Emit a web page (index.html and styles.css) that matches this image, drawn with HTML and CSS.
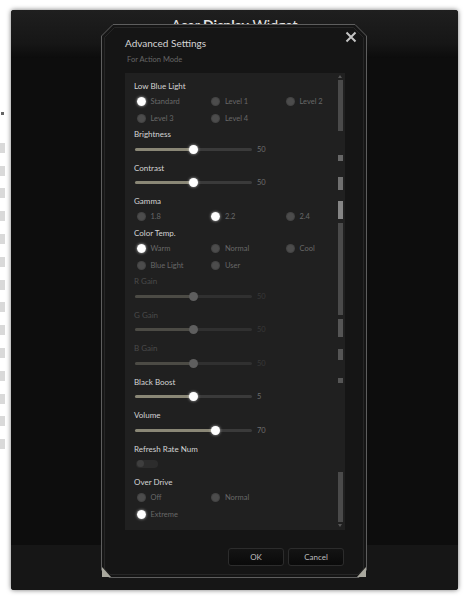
FILE: index.html
```html
<!DOCTYPE html>
<html lang="en">
  <head>
    <meta charset="UTF-8" />
    <meta name="viewport" content="width=device-width, initial-scale=1.0" />
    <title>Acer Display Widget - Advanced Settings</title>
    <link rel="stylesheet" href="styles.css">
  </head>
  <body>
    <div class="side-strip">
      <span class="side-mark"></span>
      <span class="side-item"></span>
      <span class="side-item"></span>
      <span class="side-item"></span>
      <span class="side-item"></span>
      <span class="side-item"></span>
      <span class="side-item"></span>
      <span class="side-item"></span>
      <span class="side-item"></span>
      <span class="side-item"></span>
      <span class="side-item"></span>
      <span class="side-item"></span>
      <span class="side-item"></span>
      <span class="side-item"></span>
      <span class="side-item"></span>
    </div>

    <div class="app-window">
      <div class="app-header">
        <h1 class="app-title">Acer <b>Display</b> Widget</h1>
      </div>
      <div class="app-body"></div>
      <div class="app-footer"></div>

      <div class="dialog">
        <svg class="dialog-frame" width="266" height="554" viewBox="0 0 266 554">
          <path d="M0.5,12 L12,0.5 L254,0.5 L265.5,12 L265.5,546 L258,553.5 L8,553.5 L0.5,546 Z" fill="#151515" stroke="#5e5e5e" />
          <path d="M3.5,13.5 L13.5,3.5 L252.5,3.5 L262.5,13.5 L262.5,545 L257,550.5 L9,550.5 L3.5,545 Z" fill="none" stroke="#262626" />
          <polygon points="1,543 10,553 1,553" fill="#a9a89e" />
          <polygon points="265,543 256,553 265,553" fill="#a9a89e" />
        </svg>

        <button class="close-btn" aria-label="Close">
          <svg width="12" height="12" viewBox="0 0 12 12">
            <path d="M1.5,1.5 L10.5,10.5 M10.5,1.5 L1.5,10.5" stroke="#c4c4c4" stroke-width="2" />
          </svg>
        </button>

        <div class="dialog-title">Advanced Settings</div>
        <div class="dialog-sub">For Action Mode</div>

        <div class="panel">
          <div class="settings">
            <section class="setting">
              <div class="setting-label">Low Blue Light</div>
              <div class="radio-group">
                <span class="radio checked"><span class="dot"></span>Standard</span>
                <span class="radio"><span class="dot"></span>Level 1</span>
                <span class="radio"><span class="dot"></span>Level 2</span>
                <span class="radio"><span class="dot"></span>Level 3</span>
                <span class="radio"><span class="dot"></span>Level 4</span>
              </div>
            </section>

            <section class="setting">
              <div class="setting-label">Brightness</div>
              <div class="slider">
                <div class="track"><div class="fill" style="width: 50%"><span class="thumb"></span></div></div>
                <span class="value">50</span>
              </div>
            </section>

            <section class="setting">
              <div class="setting-label">Contrast</div>
              <div class="slider">
                <div class="track"><div class="fill" style="width: 50%"><span class="thumb"></span></div></div>
                <span class="value">50</span>
              </div>
            </section>

            <section class="setting">
              <div class="setting-label">Gamma</div>
              <div class="radio-group">
                <span class="radio"><span class="dot"></span>1.8</span>
                <span class="radio checked"><span class="dot"></span>2.2</span>
                <span class="radio"><span class="dot"></span>2.4</span>
              </div>
            </section>

            <section class="setting">
              <div class="setting-label">Color Temp.</div>
              <div class="radio-group">
                <span class="radio checked"><span class="dot"></span>Warm</span>
                <span class="radio"><span class="dot"></span>Normal</span>
                <span class="radio"><span class="dot"></span>Cool</span>
                <span class="radio"><span class="dot"></span>Blue Light</span>
                <span class="radio"><span class="dot"></span>User</span>
              </div>
            </section>

            <section class="setting disabled">
              <div class="setting-label">R Gain</div>
              <div class="slider">
                <div class="track"><div class="fill" style="width: 50%"><span class="thumb"></span></div></div>
                <span class="value">50</span>
              </div>
            </section>

            <section class="setting disabled">
              <div class="setting-label">G Gain</div>
              <div class="slider">
                <div class="track"><div class="fill" style="width: 50%"><span class="thumb"></span></div></div>
                <span class="value">50</span>
              </div>
            </section>

            <section class="setting disabled">
              <div class="setting-label">B Gain</div>
              <div class="slider">
                <div class="track"><div class="fill" style="width: 50%"><span class="thumb"></span></div></div>
                <span class="value">50</span>
              </div>
            </section>

            <section class="setting">
              <div class="setting-label">Black Boost</div>
              <div class="slider">
                <div class="track"><div class="fill" style="width: 50%"><span class="thumb"></span></div></div>
                <span class="value">5</span>
              </div>
            </section>

            <section class="setting">
              <div class="setting-label">Volume</div>
              <div class="slider">
                <div class="track"><div class="fill" style="width: 69%"><span class="thumb"></span></div></div>
                <span class="value">70</span>
              </div>
            </section>

            <section class="setting">
              <div class="setting-label">Refresh Rate Num</div>
              <div class="toggle-row">
                <span class="toggle"><span class="knob"></span></span>
              </div>
            </section>

            <section class="setting">
              <div class="setting-label">Over Drive</div>
              <div class="radio-group">
                <span class="radio"><span class="dot"></span>Off</span>
                <span class="radio"><span class="dot"></span>Normal</span>
                <span class="radio"></span>
                <span class="radio checked"><span class="dot"></span>Extreme</span>
              </div>
            </section>
          </div>

          <div class="scrollbar">
            <span class="sb-arrow up"></span>
            <span class="sb sb-1"></span>
            <span class="sb sb-2"></span>
            <span class="sb sb-3"></span>
            <span class="sb sb-4"></span>
            <span class="sb sb-5"></span>
            <span class="sb sb-6"></span>
            <span class="sb sb-7"></span>
            <span class="sb sb-8"></span>
            <span class="sb sb-9"></span>
            <span class="sb-arrow down"></span>
          </div>
        </div>

        <div class="dialog-actions">
          <button class="btn">OK</button>
          <button class="btn">Cancel</button>
        </div>
      </div>
    </div>
  </body>
</html>
```

FILE: styles.css
```css
* {
  box-sizing: border-box;
}

body {
  margin: 0;
  padding: 10px 10px 10px 0;
  height: 600px;
  background: #fff;
  display: flex;
  font-family: "Lato", "Liberation Sans", sans-serif;
  overflow: hidden;
}

/* Items peeking out from behind the window */
.side-strip {
  width: 11px;
  display: flex;
  flex-direction: column;
  gap: 12.8px;
  padding-top: 102px;
}

.side-mark {
  width: 3px;
  height: 3px;
  margin-left: 1px;
  margin-bottom: 15px;
  background: #666;
}

.side-item {
  width: 5px;
  height: 10px;
  background: #d9d9d9;
}

/* Main window */
.app-window {
  position: relative;
  flex: 1;
  display: flex;
  flex-direction: column;
  background: #0d0d0d;
  border-radius: 3px;
  box-shadow: 0 0 5px rgba(0, 0, 0, 0.55);
  overflow: hidden;
}

.app-header {
  height: 48px;
  padding-top: 6px;
  text-align: center;
  background: linear-gradient(#1f1f1f, #161616 70%, #0c0c0c);
}

.app-title {
  margin: 0;
  font-size: 14px;
  font-weight: 400;
  line-height: 17px;
  color: #e4e4e4;
}

.app-body {
  flex: 1;
}

.app-footer {
  height: 45px;
  background: #161616;
}

/* Dialog */
.dialog {
  position: absolute;
  left: 90px;
  top: 14px;
  width: 266px;
  height: 554px;
  padding: 12px 22px 0 24px;
}

.dialog-frame {
  position: absolute;
  left: 0;
  top: 0;
}

.close-btn {
  position: absolute;
  left: 244px;
  top: 7px;
  width: 12px;
  height: 12px;
  padding: 0;
  border: none;
  background: none;
  display: flex;
}

.dialog-title,
.dialog-sub,
.panel,
.dialog-actions {
  position: relative;
}

.dialog-title {
  font-size: 10px;
  line-height: 14px;
  color: #d6d6d6;
}

.dialog-sub {
  margin-top: 3px;
  padding-left: 2px;
  font-size: 7.5px;
  line-height: 14px;
  color: #666;
}

.panel {
  margin-top: 6px;
  height: 457px;
  display: flex;
  background: #202020;
}

.settings {
  flex: 1;
  min-width: 0;
  padding: 6.5px 0 0 9px;
}

.setting-label {
  font-size: 8px;
  line-height: 13px;
  color: #d4d4d4;
}

.disabled .setting-label {
  color: #4a4a4a;
}

/* Radios */
.radio-group {
  display: grid;
  grid-template-columns: 74.5px 74.5px 1fr;
  grid-auto-rows: 17px;
  padding-left: 2.5px;
  margin-bottom: 1.5px;
}

.radio {
  display: flex;
  align-items: center;
  gap: 5px;
  font-size: 7.5px;
  color: #686868;
}

.dot {
  width: 9px;
  height: 9px;
  border-radius: 50%;
  background: radial-gradient(circle, #4c4c4c 45%, #444 60%, #3a3a3a);
}

.radio.checked .dot {
  background: radial-gradient(circle, #fff 55%, #e6e6e6);
  box-shadow: 0 0 3px rgba(255, 255, 255, 0.7);
}

/* Sliders */
.slider {
  height: 16px;
  margin-bottom: 4.5px;
  padding-left: 1px;
  display: flex;
  align-items: center;
  gap: 5px;
}

.track {
  width: 117px;
  height: 3px;
  border-radius: 2px;
  background: #3a3a3a;
}

.fill {
  position: relative;
  height: 100%;
  border-radius: 2px;
  background: #8a8776;
}

.thumb {
  position: absolute;
  right: -4.5px;
  top: -3px;
  width: 9px;
  height: 9px;
  border-radius: 50%;
  background: #fff;
  box-shadow: 0 0 3px rgba(255, 255, 255, 0.7);
}

.value {
  font-size: 7.5px;
  color: #6e6e6e;
}

.disabled .track {
  background: #303030;
}

.disabled .fill {
  background: #4c4b45;
}

.disabled .thumb {
  background: #5e5e5e;
  box-shadow: none;
}

.disabled .value {
  color: #383838;
}

/* Toggle */
.toggle-row {
  height: 16px;
  margin-bottom: 4.5px;
  padding-left: 2px;
  display: flex;
  align-items: center;
}

.toggle {
  width: 22px;
  height: 8px;
  padding: 0 1px;
  border-radius: 4px;
  background: #2c2c2c;
  display: flex;
  align-items: center;
}

.knob {
  width: 7px;
  height: 7px;
  border-radius: 50%;
  background: #3e3e3e;
}

/* Scrollbar */
.scrollbar {
  flex: none;
  width: 6px;
  margin-right: 2px;
  display: flex;
  flex-direction: column;
  align-items: center;
}

.sb {
  width: 5px;
  background: #4a4a4a;
}

.sb-arrow {
  width: 0;
  height: 0;
  border-left: 2px solid transparent;
  border-right: 2px solid transparent;
}

.sb-arrow.up {
  margin-top: 2px;
  border-bottom: 3px solid #555;
}

.sb-arrow.down {
  margin-top: 2px;
  border-top: 3px solid #555;
}

.sb-1 { margin-top: 2px; height: 51px; }
.sb-2 { margin-top: 24px; height: 6px; background: #666; }
.sb-3 { margin-top: 16px; height: 13px; background: #707070; }
.sb-4 { margin-top: 11px; height: 18px; background: #858585; }
.sb-5 { margin-top: 4px; height: 92px; }
.sb-6 { margin-top: 4px; height: 18px; background: #555; }
.sb-7 { margin-top: 12px; height: 11px; background: #555; }
.sb-8 { margin-top: 18px; height: 5px; background: #555; }
.sb-9 { margin-top: 89px; height: 50px; }

/* Buttons */
.dialog-actions {
  margin-top: 18px;
  padding-right: 1px;
  display: flex;
  justify-content: flex-end;
  gap: 4px;
}

.btn {
  width: 56px;
  height: 18px;
  padding: 0;
  border: 1px solid #2c2c2c;
  border-radius: 3px;
  background: linear-gradient(#141414, #0a0a0a);
  color: #bdbdbd;
  font-family: "Lato", "Liberation Sans", sans-serif;
  font-size: 8px;
}
```
